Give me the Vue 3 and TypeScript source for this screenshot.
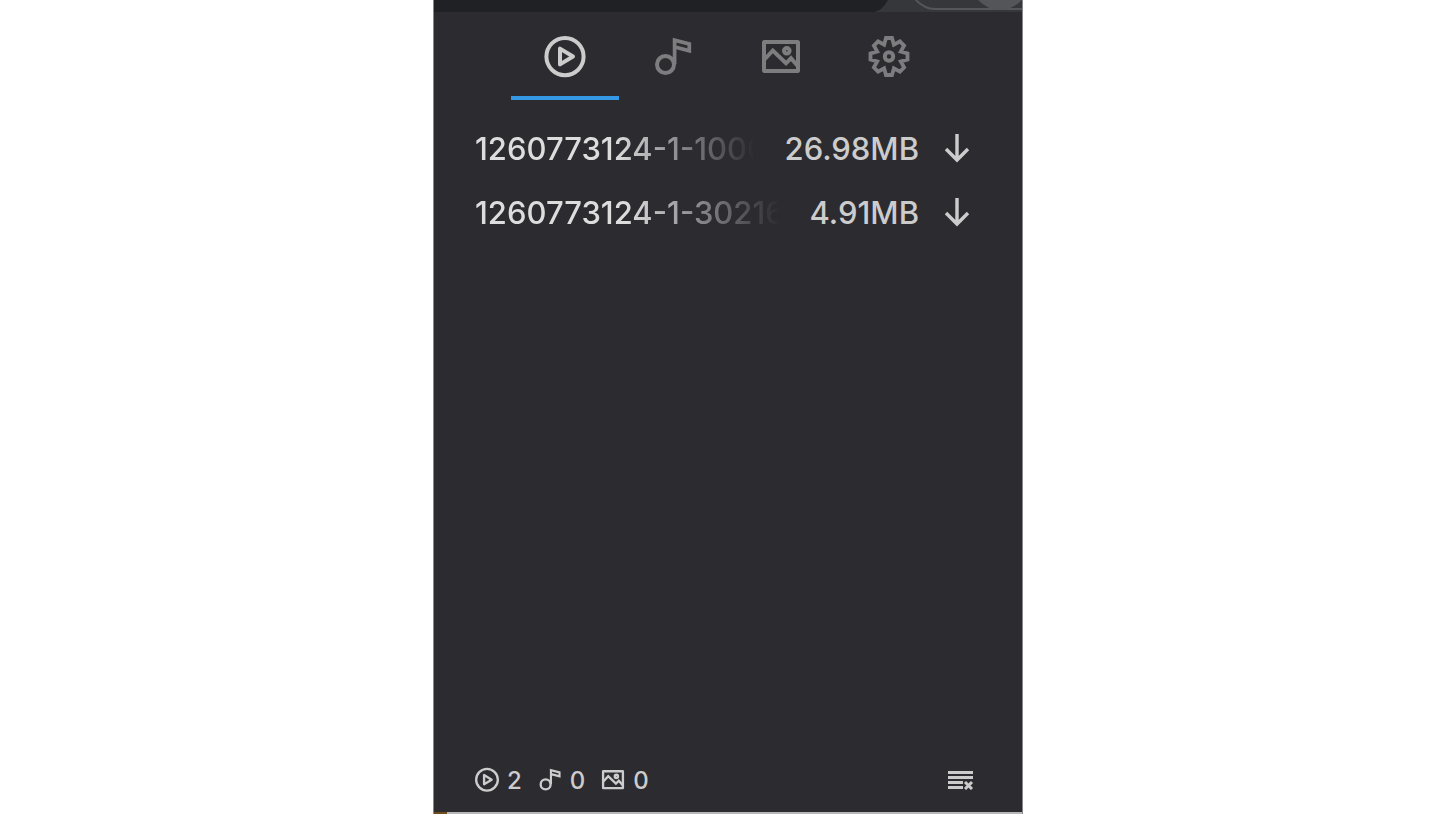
<script setup lang="ts">
import { ref } from 'vue'

type Kind = 'video' | 'audio' | 'image' | 'settings'

interface MediaFile {
  name: string
  size: string
}

const tabs: { kind: Kind; label: string }[] = [
  { kind: 'video', label: 'Video' },
  { kind: 'audio', label: 'Audio' },
  { kind: 'image', label: 'Images' },
  { kind: 'settings', label: 'Settings' },
]

const active = ref<Kind>('video')

const files: MediaFile[] = [
  { name: '1260773124-1-10002', size: '26.98MB' },
  { name: '1260773124-1-30216', size: '4.91MB' },
]

const counts: { kind: Kind; total: number }[] = [
  { kind: 'video', total: 2 },
  { kind: 'audio', total: 0 },
  { kind: 'image', total: 0 },
]
</script>

<template>
  <svg class="defs" aria-hidden="true">
    <symbol id="icon-video" viewBox="0 0 48 48">
      <circle cx="24" cy="23.6" r="18.6" />
      <path d="M19 15.6v15.8L32 23.5z" stroke-linejoin="round" />
    </symbol>
    <symbol id="icon-audio" viewBox="0 0 48 48">
      <circle cx="16.5" cy="31.5" r="8.5" />
      <path stroke-width="3.7" d="M25.6 31V7.2L40.3 11v6.8L26 14" />
    </symbol>
    <symbol id="icon-image" viewBox="0 0 48 48">
      <rect x="7" y="9" width="34" height="29" rx="0.5" />
      <circle cx="29.8" cy="17.8" r="2.8" />
      <path d="M7.5 26.5l8.3-9 13.2 12.8 5-5 6.5 7.5" />
    </symbol>
    <symbol id="icon-settings" viewBox="0 0 48 48">
      <circle cx="24" cy="23.5" r="4.2" />
      <path
        stroke-width="3.8"
        d="M21 5h6L28.9 11.7 34.9 8.4 39.1 12.6 35.8 18.6 42.5 20.5v6L35.8 28.4 39.1 34.4 34.9 38.6 28.9 35.3 27 42h-6L19.1 35.3 13.1 38.6 8.9 34.4 12.2 28.4 5.5 26.5v-6L12.2 18.6 8.9 12.6 13.1 8.4 19.1 11.7z"
      />
    </symbol>
  </svg>

  <main class="popup">
    <div class="browser" aria-hidden="true">
      <svg viewBox="0 0 148 12">
        <path class="toolbar" d="M0 12Q8 11 14 0H148V12z" />
        <path class="field" d="M41-1Q50 9 61 9H148" />
        <path class="avatar" d="M104 0Q114 10 126 10T148 0z" />
      </svg>
    </div>

    <nav class="tabs">
      <button
        v-for="tab in tabs"
        :key="tab.kind"
        type="button"
        class="tab"
        :class="{ active: active === tab.kind }"
        :aria-label="tab.label"
        @click="active = tab.kind"
      >
        <svg class="icon"><use :href="`#icon-${tab.kind}`" /></svg>
      </button>
    </nav>

    <ul class="files">
      <li v-for="file in files" :key="file.name" class="file">
        <span class="name">{{ file.name }}</span>
        <span class="size">{{ file.size }}</span>
        <button type="button" class="download" aria-label="Download">
          <svg viewBox="0 0 28 32">
            <path d="M14 2v26M3 17l11 11 11-11" />
          </svg>
        </button>
      </li>
    </ul>

    <footer class="footer">
      <span v-for="item in counts" :key="item.kind" class="count">
        <svg class="icon"><use :href="`#icon-${item.kind}`" /></svg>
        <span>{{ item.total }}</span>
      </span>
      <button type="button" class="clear" aria-label="Clear list">
        <svg viewBox="0 0 26 20">
          <path d="M0 2.4h25M0 7.4h25M0 12.6h15M0 17.6h15M17 12l7 7M24 12l-7 7" />
        </svg>
      </button>
    </footer>
    <div class="edge"></div>
  </main>
</template>

<style>
body {
  margin: 0;
  background: #fff;
}
</style>

<style scoped>
.defs {
  position: absolute;
  width: 0;
  height: 0;
}

.popup {
  box-sizing: border-box;
  display: flex;
  flex-direction: column;
  max-width: 590px;
  min-height: 100vh;
  margin: 0 auto;
  border: solid #87868a;
  border-width: 0 1px;
  background: #2c2b30;
  color: #cccccc;
  font-family: Inter, "Liberation Sans", sans-serif;
  font-size: 31px;
  font-weight: 500;
}

button {
  padding: 0;
  border: 0;
  background: none;
  color: inherit;
  font: inherit;
  cursor: pointer;
}

svg {
  display: block;
  fill: none;
  stroke: currentColor;
}

.browser {
  display: flex;
  justify-content: flex-end;
  height: 12px;
  background: #202125;
  overflow: hidden;
}

.browser svg {
  width: 148px;
  height: 12px;
  stroke: none;
}

.browser .toolbar {
  fill: #36373b;
}

.browser .field {
  stroke: #55565a;
  stroke-width: 2;
}

.browser .avatar {
  fill: #545559;
}

.tabs {
  display: flex;
  justify-content: center;
  padding-right: 2px;
}

.tab {
  display: flex;
  justify-content: center;
  box-sizing: border-box;
  width: 108px;
  height: 88px;
  padding-top: 21px;
  border-bottom: 4px solid transparent;
  color: #7d7d7f;
}

.tab.active {
  border-color: #3498e5;
  color: #cccccc;
}

.icon {
  width: 48px;
  height: 48px;
  stroke-width: 4;
}

.files {
  flex: 1;
  margin: 0;
  padding: 16px 51px 0 41px;
  list-style: none;
}

.file {
  display: flex;
  align-items: center;
  height: 64px;
}

.name {
  flex: 1;
  min-width: 0;
  overflow: hidden;
  color: #dddddd;
  white-space: nowrap;
  mask-image: linear-gradient(to right, #000 50%, transparent);
}

.size {
  margin-left: 30px;
}

.download {
  margin-left: 24px;
}

.download svg {
  width: 28px;
  height: 32px;
  stroke-width: 3.4;
}

.footer {
  display: flex;
  align-items: center;
  gap: 14px;
  height: 64px;
  padding: 0 48px 0 39px;
  font-size: 24px;
}

.count {
  display: flex;
  align-items: center;
  gap: 6px;
}

.count .icon {
  width: 28px;
  height: 28px;
}

.clear {
  margin-left: auto;
}

.clear svg {
  width: 26px;
  height: 20px;
  stroke-width: 3;
}

.edge {
  height: 2px;
  background: linear-gradient(to right, #6f4c1c 13px, #b7b6b9 13px);
}
</style>
